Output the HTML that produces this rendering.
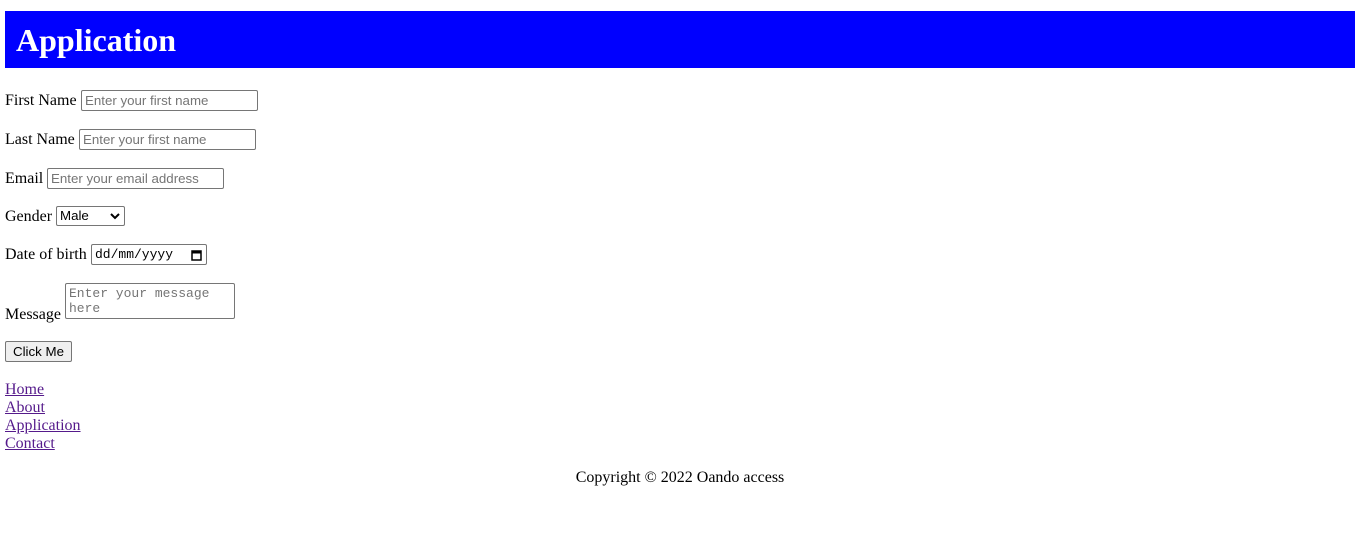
<!DOCTYPE html>
<html><head><style>
body{margin:0;width:1361px;height:556px;background:#fff;font-family:"Liberation Serif",serif;font-size:16px;color:#000;position:relative;overflow:hidden}
.a{position:absolute;white-space:nowrap;line-height:18px}
.h{position:absolute;left:5px;top:11px;width:1350px;height:57px;background:#00f}
.h span{position:absolute;left:11px;top:11px;color:#fff;font-weight:bold;font-size:32px;line-height:37px}
.in{position:absolute;box-sizing:border-box;border:1px solid #767676;border-radius:2px;background:#fff;font-family:"Liberation Sans",sans-serif;font-size:13.3px;color:#757575;padding:0 3px;line-height:19px;height:21px}
.mono{font-family:"Liberation Mono",monospace;font-size:13px}
a{color:#551a8b;text-decoration:underline}
</style></head><body>
<div class="h"><span>Application</span></div>
<div class="a" style="left:5px;top:92px">First Name</div>
<div class="in" style="left:81px;top:90px;width:177px">Enter your first name</div>
<div class="a" style="left:5px;top:131px">Last Name</div>
<div class="in" style="left:79px;top:129px;width:177px">Enter your first name</div>
<div class="a" style="left:5px;top:170px">Email</div>
<div class="in" style="left:47px;top:168px;width:177px">Enter your email address</div>
<div class="a" style="left:5px;top:208px">Gender</div>
<div class="in" style="left:56px;top:206px;width:69px;height:20px;color:#000;line-height:18px">Male
<svg style="position:absolute;right:4px;top:6px" width="10" height="7" viewBox="0 0 10 7"><path d="M1 1L5 5L9 1" stroke="#000" stroke-width="2" fill="none"/></svg></div>
<div class="a" style="left:5px;top:246px">Date of birth</div>
<div class="in mono" style="left:91px;top:244px;width:116px;color:#000">dd/mm/yyyy
<svg style="position:absolute;right:4px;top:4px" width="11" height="12" viewBox="0 0 11 12"><rect x="1" y="2" width="9" height="9" fill="none" stroke="#000" stroke-width="1.5"/><rect x="1" y="2" width="9" height="2.5" fill="#000"/></svg></div>
<div class="a" style="left:5px;top:306px">Message</div>
<div class="in mono" style="left:65px;top:283px;width:170px;height:36px;line-height:15px;padding-top:2px">Enter your message<br>here</div>
<div class="in" style="left:5px;top:341px;width:67px;background:#efefef;color:#000;text-align:center;padding:0">Click Me</div>
<div class="a" style="left:5px;top:381px"><a>Home</a></div>
<div class="a" style="left:5px;top:399px"><a>About</a></div>
<div class="a" style="left:5px;top:417px"><a>Application</a></div>
<div class="a" style="left:5px;top:435px"><a>Contact</a></div>
<div class="a" style="left:0;width:1360px;text-align:center;top:469px">Copyright © 2022 Oando access</div>
</body></html>
